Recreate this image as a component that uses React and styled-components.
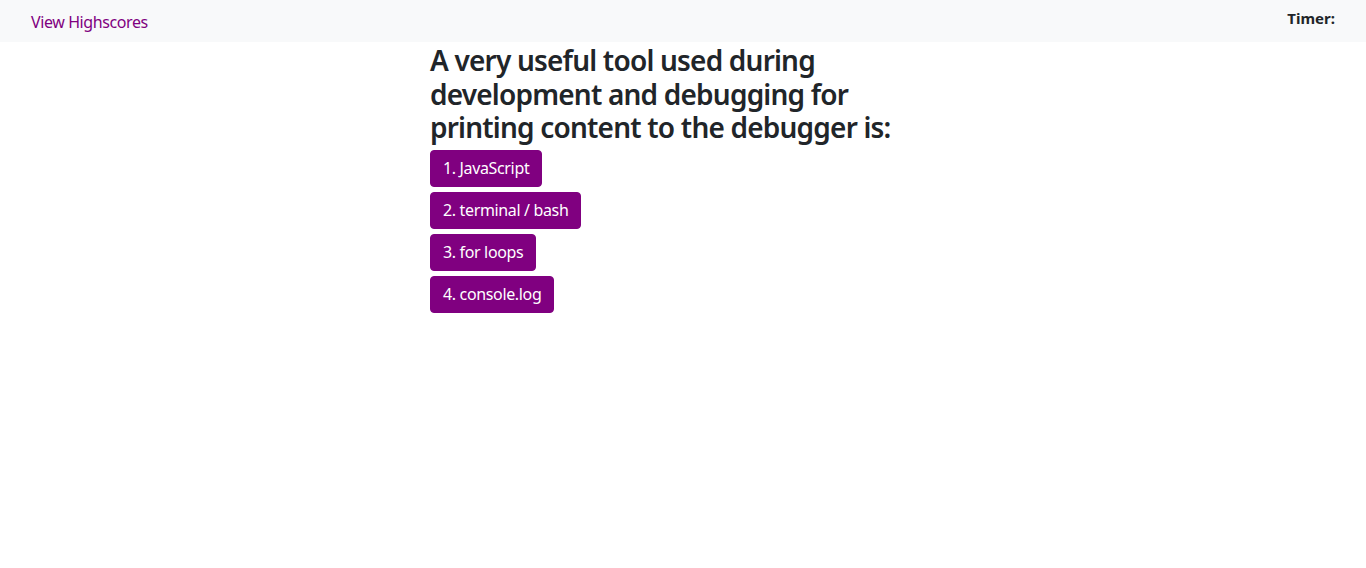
import * as React from 'react';
import styled, { createGlobalStyle } from 'styled-components';

const GlobalStyle = createGlobalStyle`
  body {
    margin: 0;
    font-family: "Segoe UI", "Noto Sans", sans-serif;
    font-size: 16px;
    color: #212529;
    background: #fff;
  }
`;

//top bar
const NavBar = styled.nav`
  display: flex;
  justify-content: space-between;
  align-items: flex-start;
  height: 42px;
  background-color: #f8f9fa;
  padding: 0 31px;
  box-sizing: border-box;
`;

const NavLink = styled.a`
  color: #800080;
  text-decoration: none;
  font-size: 16px;
  line-height: 24px;
  letter-spacing: -0.4px;
  margin-top: 10px;
  cursor: pointer;
`;

const Timer = styled.span`
  font-weight: 700;
  font-size: 15px;
  line-height: 20px;
  margin-top: 8px;
`;

//quiz area
const Quiz = styled.main`
  width: 480px;
  margin-left: 430px;
`;

const Question = styled.h3`
  margin: 2px 0 5px;
  font-size: 28px;
  font-weight: 600;
  line-height: 1.2;
  letter-spacing: -0.8px;
`;

const Choices = styled.div`
  display: flex;
  flex-direction: column;
  align-items: flex-start;
  gap: 5px;
`;

const Choice = styled.button`
  background-color: #800080;
  color: #fff;
  border: 1px solid #800080;
  border-radius: 4px;
  padding: 6px 12px;
  font-family: inherit;
  font-size: 16px;
  line-height: 23px;
  letter-spacing: -0.35px;
  cursor: pointer;
`;

const choices = ['1. JavaScript', '2. terminal / bash', '3. for loops', '4. console.log'];

export default function App() {
  return (
    <>
      <GlobalStyle />
      <NavBar>
        <NavLink>View Highscores</NavLink>
        <Timer>Timer: </Timer>
      </NavBar>
      <Quiz>
        <Question>
          A very useful tool used during development and debugging for printing content to the debugger is:
        </Question>
        <Choices>
          {choices.map((c) => (
            <Choice key={c}>{c}</Choice>
          ))}
        </Choices>
      </Quiz>
    </>
  );
}
